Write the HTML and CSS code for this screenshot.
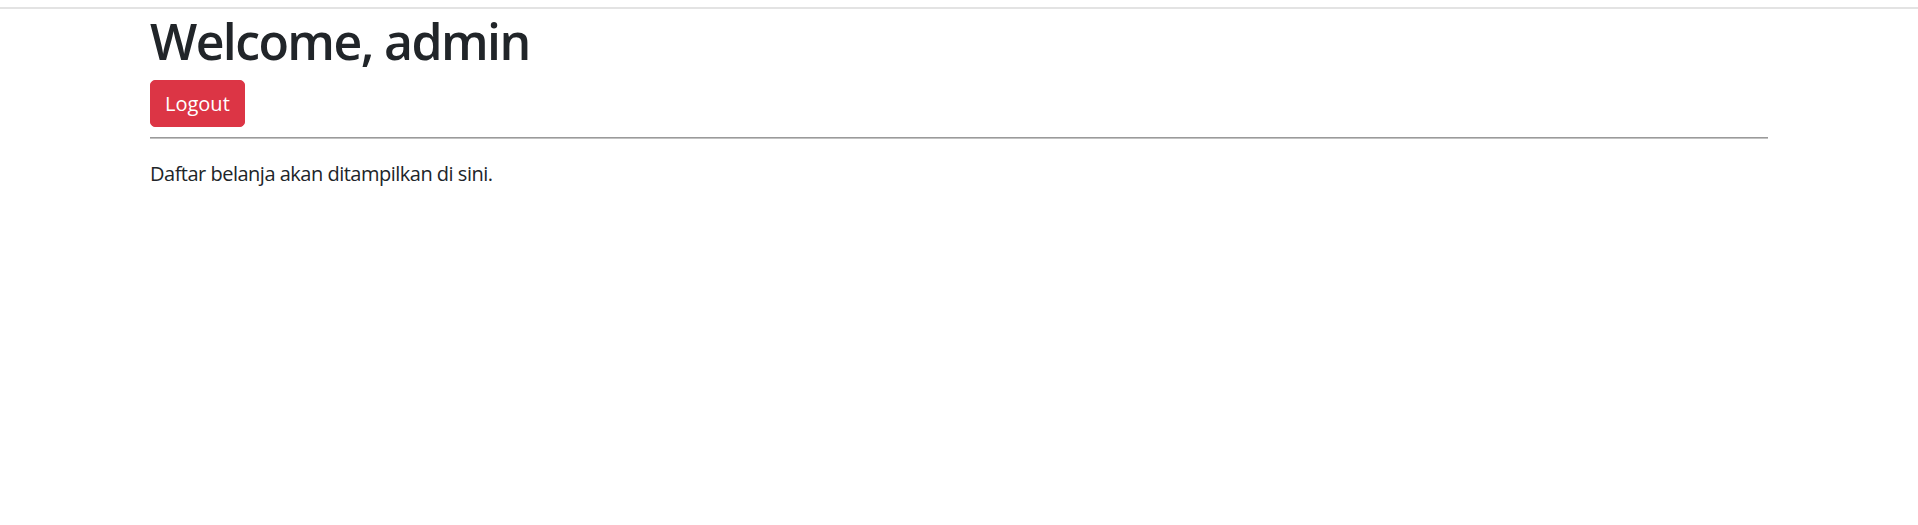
FILE: index.html
```html
<!DOCTYPE html>
<html lang="id">
<head>
<meta charset="utf-8">
<title>Welcome</title>
<link rel="stylesheet" href="styles.css">
</head>
<body>
<div class="topbar"></div>
<main class="container">
  <h1 class="title">Welcome, admin</h1>
  <button class="btn-logout" type="button">Logout</button>
  <hr class="divider">
  <p class="note">Daftar belanja akan ditampilkan di sini.</p>
</main>
</body>
</html>
```
FILE: styles.css
```css
html, body {
  margin: 0;
  padding: 0;
  background: #ffffff;
}
body {
  font-family: "Open Sans", "Noto Sans", "Liberation Sans", sans-serif;
  color: #212529;
  font-size: 20px;
  line-height: 30px;
}
.topbar {
  height: 2px;
  margin-top: 7px;
  background: #e3e3e3;
}
.container {
  width: 1618px;
  margin: 0 auto;
}
.title {
  margin: 2px 0 9px;
  font-size: 50px;
  line-height: 60px;
  font-weight: 600;
  letter-spacing: -1.6px;
}
.btn-logout {
  display: block;
  font-family: inherit;
  font-size: 20px;
  line-height: 30px;
  padding: 7.5px 14px;
  color: #ffffff;
  background: #dc3545;
  border: 1px solid #dc3545;
  border-radius: 5px;
  cursor: pointer;
}
.divider {
  margin: 10px 0 0;
  border: 0;
  border-top: 1px solid #9a9a9a;
  border-bottom: 1px solid #c2c2c2;
  height: 0;
}
.note {
  margin: 20px 0 0;
  letter-spacing: -0.5px;
}
```
